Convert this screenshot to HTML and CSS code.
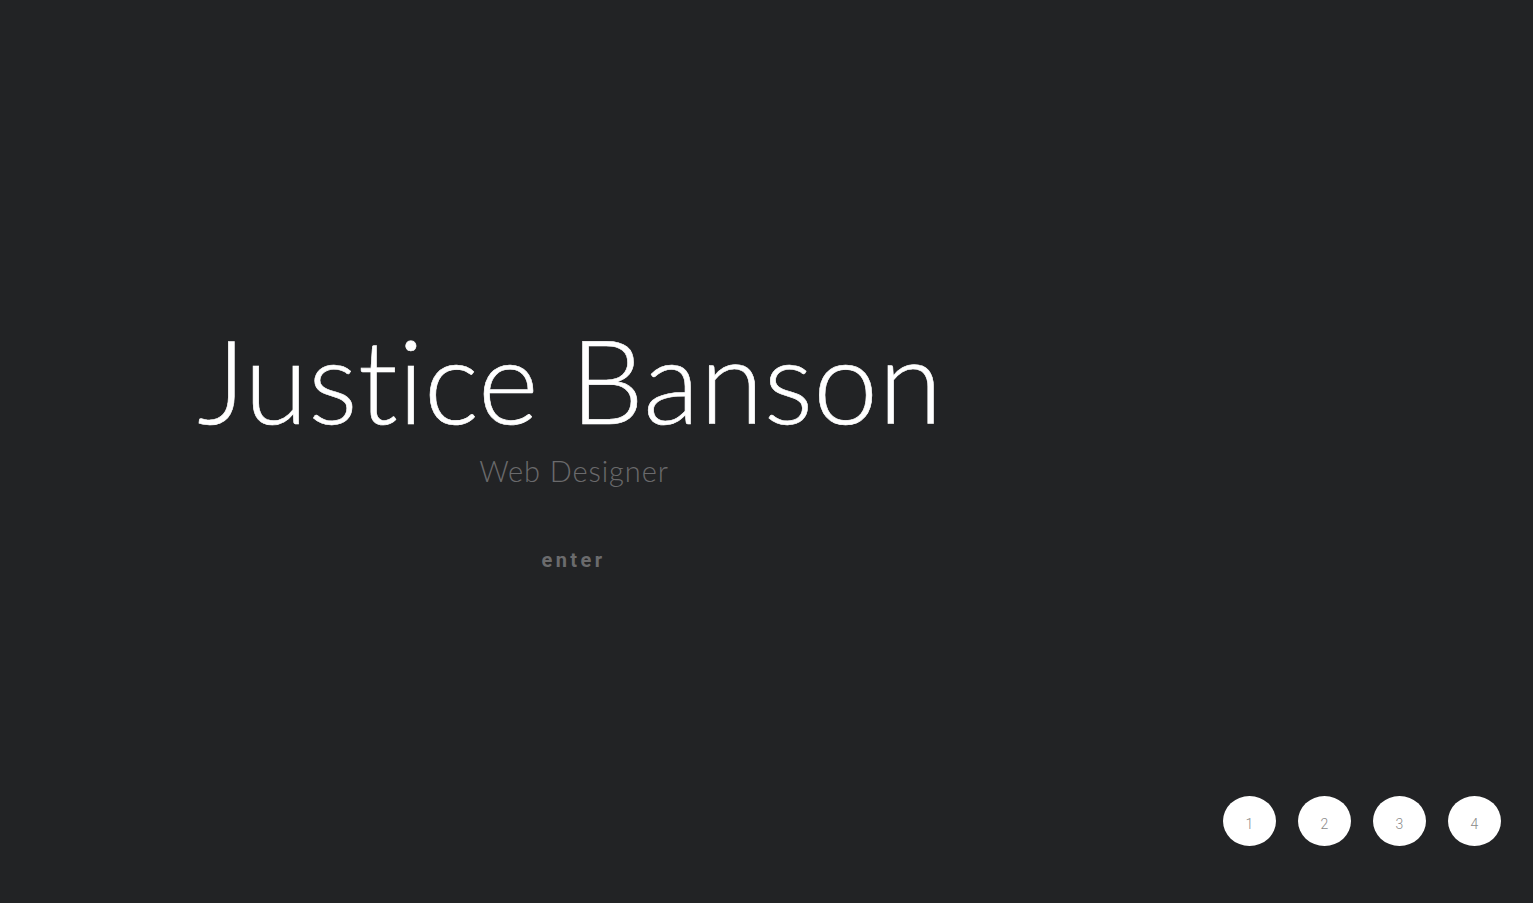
FILE: index.html
```html
<!DOCTYPE html>
<html lang="en">
<head>
<meta charset="utf-8">
<title>Justice Banson</title>
<link rel="stylesheet" href="styles.css">
</head>
<body>
<main class="page">
  <section class="hero">
    <h1 class="name">Justice Banson</h1>
    <p class="role">Web Designer</p>
    <a class="enter" href="#">enter</a>
  </section>
  <nav class="pager">
    <a class="dot" href="#">1</a>
    <a class="dot" href="#">2</a>
    <a class="dot" href="#">3</a>
    <a class="dot" href="#">4</a>
  </nav>
</main>
</body>
</html>
```
FILE: styles.css
```css
html, body {
  margin: 0;
  padding: 0;
  height: 100%;
  background: #222325;
}
.page {
  height: 903px;
  display: flex;
  flex-direction: column;
  overflow: hidden;
}
.hero {
  width: 1140px;
  padding-top: 318px;
  text-align: center;
  flex: 1;
}
.name {
  margin: 0;
  font-family: Lato, "Open Sans", sans-serif;
  font-weight: 300;
  font-size: 116px;
  line-height: 124px;
  color: #ffffff;
  letter-spacing: 0.3px;
  font-variant-ligatures: none;
  -webkit-text-stroke: 0.6px #ffffff;
}
.role {
  margin: 11px 0 0;
  padding-left: 8px;
  font-family: Lato, "Open Sans", sans-serif;
  font-weight: 300;
  font-size: 29px;
  line-height: 36px;
  letter-spacing: 0.9px;
  color: #6a6a6c;
}
.enter {
  display: inline-block;
  margin-top: 59px;
  margin-left: 7px;
  font-family: Roboto, sans-serif;
  font-weight: 700;
  font-size: 20px;
  letter-spacing: 3.4px;
  color: #6b6b6d;
  text-decoration: none;
}
.pager {
  display: flex;
  justify-content: flex-end;
  gap: 22px;
  padding: 0 32px 57px 0;
}
.dot {
  width: 53px;
  height: 50px;
  border-radius: 50%;
  background: #ffffff;
  display: flex;
  align-items: center;
  justify-content: center;
  padding-top: 6px;
  box-sizing: border-box;
  font-family: Roboto, sans-serif;
  font-weight: 300;
  font-size: 14px;
  color: #8a8a8a;
  text-decoration: none;
}
```
